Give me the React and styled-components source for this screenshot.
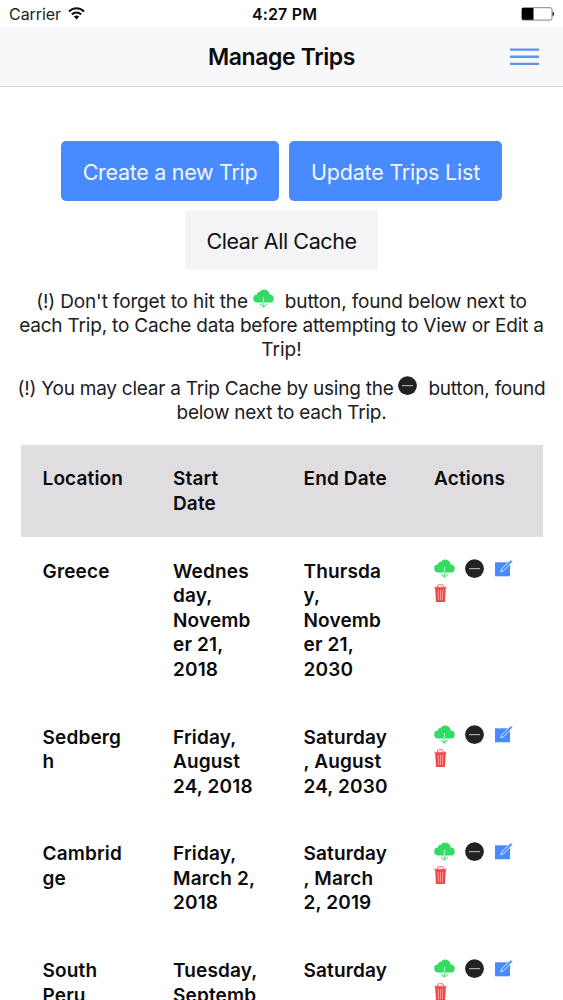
import styled, { createGlobalStyle } from "styled-components";

const GlobalStyle = createGlobalStyle`
  * { box-sizing: border-box; }
  body {
    margin: 0;
    background: #fff;
    overflow: hidden;
  }
`;

const TRIPS = [
  { location: "Greece", start: "Wednes\nday,\nNovemb\ner 21,\n2018", end: "Thursda\ny,\nNovemb\ner 21,\n2030" },
  { location: "Sedberg\nh", start: "Friday,\nAugust\n24, 2018", end: "Saturday\n, August\n24, 2030" },
  { location: "Cambrid\nge", start: "Friday,\nMarch 2,\n2018", end: "Saturday\n, March\n2, 2019" },
  { location: "South\nPeru", start: "Tuesday,\nSeptemb", end: "Saturday\n," },
];

const Page = styled.div`
  font-family: Inter, "Liberation Sans", sans-serif;
  width: 100%;
  height: 1000px;
  overflow: hidden;
  background: #fff;
  color: #0b0b0d;
`;

const StatusBar = styled.div`
  display: grid;
  grid-template-columns: 1fr auto 1fr;
  align-items: center;
  height: 27px;
  padding: 1px 8px 0 9px;
  font-size: 16px;
  line-height: 24px;
`;

const Carrier = styled.div`
  display: flex;
  align-items: center;
  gap: 7px;
  color: #222;
  letter-spacing: -0.05px;

  svg { margin-top: -2px; }
`;

const Clock = styled.div`
  padding-left: 5px;
  font-weight: 600;
  letter-spacing: 0.15px;
`;

const BatterySlot = styled.div`
  display: flex;
  justify-content: flex-end;
`;

const NavBar = styled.header`
  display: grid;
  grid-template-columns: 1fr auto 1fr;
  align-items: center;
  height: 60px;
  padding: 0 24px;
  background: #f8f7fa;
  border-bottom: 1px solid #d8d8dc;
`;

const Title = styled.h1`
  grid-column: 2;
  margin: 0;
  font-size: 23px;
  font-weight: 600;
  letter-spacing: -0.38px;
`;

const MenuButton = styled.button`
  justify-self: end;
  display: flex;
  padding: 0;
  border: 0;
  background: none;
`;

const Buttons = styled.div`
  display: flex;
  flex-wrap: wrap;
  justify-content: center;
  gap: 9px 10px;
  padding: 54px 40px 0;
`;

const Button = styled.button`
  width: ${(p) => p.$width}px;
  height: 60px;
  padding: 2px 0 0;
  border: 0;
  border-radius: ${(p) => (p.$light ? 2 : 5)}px;
  background: ${(p) => (p.$light ? "#f4f3f5" : "#488aff")};
  color: ${(p) => (p.$light ? "#111" : "#f1f6ff")};
  font-family: inherit;
  font-size: 21.5px;
  letter-spacing: ${(p) => p.$track || 0}px;
  white-space: nowrap;
`;

const Note = styled.p`
  margin: 0 0 13.5px;
  font-size: 19px;
  line-height: 24.5px;
  color: #202022;
  text-align: center;
  white-space: nowrap;

  &:first-of-type { margin-top: 19px; }
  svg { vertical-align: -1px; margin: 0 11px 0 5px; }
`;

const Line = styled.span`
  display: block;
  height: 24.5px;
  letter-spacing: ${(p) => p.$track || 0}px;
`;

const Table = styled.div`
  margin: 19.5px 20.5px 0;
`;

const Row = styled.div`
  display: grid;
  grid-template-columns: repeat(4, 1fr);
  padding: 22.4px 0 20.9px;
  background: ${(p) => (p.$head ? "#e0dde1" : "transparent")};
`;

const Cell = styled.div`
  padding-left: 22px;
  font-size: 19px;
  font-weight: 600;
  line-height: 24.5px;
  letter-spacing: 0.15px;
  white-space: pre;
  /* optical nudge, row height stays the same */
  padding-top: 0.6px;
  margin-bottom: -0.6px;
`;

const Actions = styled.div`
  display: flex;
  flex-wrap: wrap;
  align-content: flex-start;
  column-gap: 10px;
  padding: 0 20px 0 21.5px;

  svg { margin: 0 0 4.5px; }
  svg:nth-child(3) { margin-left: 1px; }
`;

const WifiIcon = () => (
  <svg width="17" height="13" viewBox="0 0 17 13" fill="none" stroke="#111" strokeWidth="2">
    <path d="M1 4.5C5 .2 12 .2 16 4.5" />
    <path d="M3.8 7.5c2.7-2.7 6.7-2.7 9.4 0" />
    <path d="M5.8 9.6C7.2 8.1 9.8 8.1 11.2 9.6L8.5 12.4z" fill="#111" stroke="none" />
  </svg>
);

const BatteryIcon = () => (
  <svg width="34" height="14" viewBox="0 0 34 14">
    <rect x="0.7" y="0.7" width="30.3" height="12.4" rx="2" fill="#fff" stroke="#777" strokeWidth="0.9" />
    <path d="M1 1h11.5v11.8H1z" fill="#000" />
    <path d="M31.6 4.8c2 .4 2 3.8 0 4.2z" fill="#111" />
  </svg>
);

const MenuIcon = () => (
  <svg width="29" height="18" viewBox="0 0 29 18" stroke="#5c94ea" strokeWidth="2.4">
    <path d="M0 1.6h29M0 8.8h29M0 15.9h29" />
  </svg>
);

const CloudIcon = () => (
  <svg width="21" height="20" viewBox="0 0 21 20" fill="none">
    <path d="M4.3 13.6A4.1 4.1 0 0 1 .2 9.6 4 4 0 0 1 4 5.6 3 3 0 0 1 6.8 2.7 5.6 5.6 0 0 1 16.7 5.6 4 4 0 0 1 16.6 13.6z" fill="#32db64" />
    <path d="M10.4 8V13.6" stroke="#bff5cf" strokeWidth="1.1" />
    <path d="M10.4 13.6v4.5M7.1 15l3.3 3.2 3.3-3.2" stroke="#6be18e" strokeWidth="1.1" />
  </svg>
);

const MinusIcon = () => (
  <svg width="19" height="20" viewBox="0 0 19 20">
    <circle cx="9.5" cy="9.6" r="9.4" fill="#222" />
    <path d="M4 9.6h11" stroke="#aaa" strokeWidth="1.2" />
  </svg>
);

const EditIcon = () => (
  <svg width="18" height="20" viewBox="0 0 18 20">
    <path d="M0 3.3h15v14H0z" fill="#488aff" />
    <path d="M5.8 12.8l1-3.1L15.8.9l1.8 1.7-8.8 9z" fill="#488aff" stroke="#dce9ff" strokeWidth="1" />
  </svg>
);

const TrashIcon = () => (
  <svg width="13" height="20" viewBox="0 0 13 20" fill="none">
    <path d="M3.6 3V1.6q0-.8.8-.8h4.1q.8 0 .8.8V3" stroke="#ef6b6b" />
    <path d="M.3 2.8h12.3v1H.3z" fill="#ef5555" />
    <path d="M1.1 3.8h10.7l-.9 14.3H2z" fill="#f24444" />
    <path d="M4.1 5.7l.4 10.6M6.45 5.7v10.6M8.8 5.7l-.4 10.6" stroke="#ffb0b0" strokeWidth=".8" />
  </svg>
);

export default function App() {
  return (
    <Page>
      <GlobalStyle />
      <StatusBar>
        <Carrier>Carrier <WifiIcon /></Carrier>
        <Clock>4:27 PM</Clock>
        <BatterySlot><BatteryIcon /></BatterySlot>
      </StatusBar>
      <NavBar>
        <Title>Manage Trips</Title>
        <MenuButton aria-label="Menu"><MenuIcon /></MenuButton>
      </NavBar>

      <Buttons>
        <Button $width={218} $track={-0.3}>Create a new Trip</Button>
        <Button $width={213} $track={-0.2}>Update Trips List</Button>
        <Button $width={193} $track={-0.42} $light>Clear All Cache</Button>
      </Buttons>

      <Note>
        <Line $track={-0.16}>(!) Don't forget to hit the<CloudIcon />button, found below next to</Line>
        <Line $track={-0.19}>each Trip, to Cache data before attempting to View or Edit a</Line>
        <Line>Trip!</Line>
      </Note>
      <Note>
        <Line $track={-0.24}>(!) You may clear a Trip Cache by using the<MinusIcon />button, found</Line>
        <Line $track={-0.25}>below next to each Trip.</Line>
      </Note>

      <Table>
        <Row $head>
          <Cell>Location</Cell>
          <Cell>{"Start\nDate"}</Cell>
          <Cell>End Date</Cell>
          <Cell>Actions</Cell>
        </Row>
        {TRIPS.map((trip) => (
          <Row key={trip.location}>
            <Cell>{trip.location}</Cell>
            <Cell>{trip.start}</Cell>
            <Cell>{trip.end}</Cell>
            <Actions>
              <CloudIcon />
              <MinusIcon />
              <EditIcon />
              <TrashIcon />
            </Actions>
          </Row>
        ))}
      </Table>
    </Page>
  );
}
